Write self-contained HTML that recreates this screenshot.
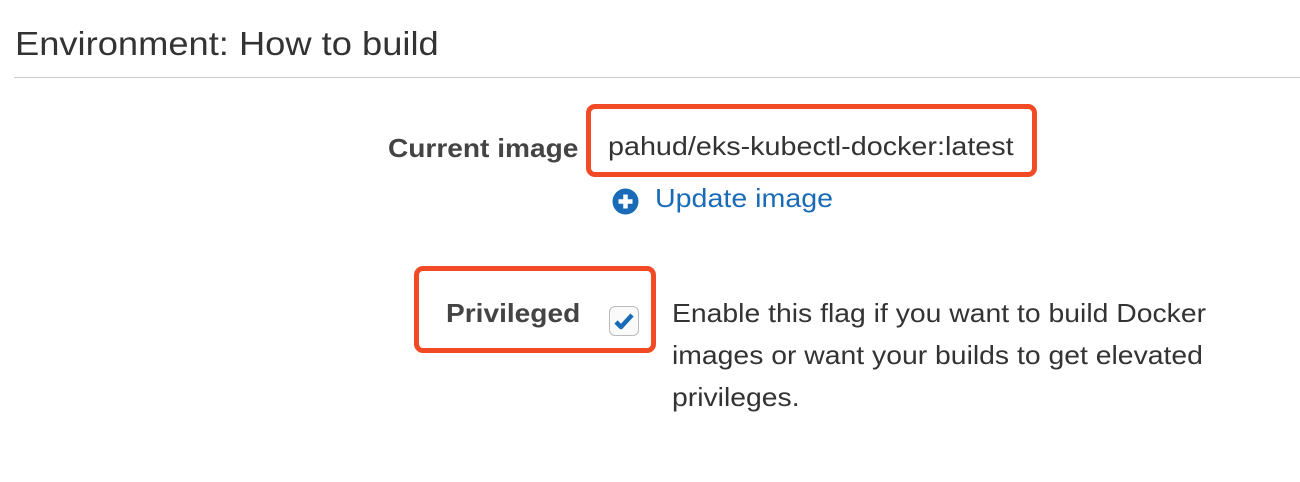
<!DOCTYPE html>
<html><head><style>
body{margin:0;width:1300px;height:482px;background:#fff;font-family:"Liberation Sans",Arial,sans-serif;color:#333;position:relative;overflow:hidden}
.a{position:absolute;white-space:nowrap}
.s{transform-origin:0 50%}
</style></head><body>
<div class="a s" style="left:15px;top:25px;font-size:33px;color:#333;transform:scaleX(1.1)">Environment: How to build</div>
<div class="a" style="left:14px;top:77px;width:1286px;height:1px;background:#ccc"></div>
<div class="a s" style="left:388px;top:133px;font-size:26px;font-weight:bold;color:#444;transform:scaleX(1.08)">Current image</div>
<div class="a" style="left:586px;top:104px;width:441px;height:63px;border:5px solid #f24a25;border-radius:9px"></div>
<div class="a s" style="left:608px;top:131px;font-size:26px;color:#333;transform:scaleX(1.105)">pahud/eks-kubectl-docker:latest</div>
<svg class="a" style="left:612px;top:188px" width="27" height="27" viewBox="0 0 27 27"><circle cx="13.5" cy="13.5" r="13" fill="#1a6bb7"/><path d="M13.5 6.5v14M6.5 13.5h14" stroke="#fff" stroke-width="4.5"/></svg>
<div class="a s" style="left:655px;top:183px;font-size:26px;color:#1a6bb7;transform:scaleX(1.1)">Update image</div>
<div class="a" style="left:414px;top:266px;width:232px;height:77px;border:5px solid #f24a25;border-radius:9px"></div>
<div class="a s" style="left:446px;top:298px;font-size:26px;font-weight:bold;color:#444;transform:scaleX(1.08)">Privileged</div>
<div class="a" style="left:609px;top:306px;width:28px;height:28px;border:1.5px solid #bbb;border-radius:6px;background:#fafafa"></div>
<svg class="a" style="left:611px;top:308px" width="26" height="26" viewBox="0 0 26 26"><path d="M5 14l5 5 11-12" fill="none" stroke="#1a6bb7" stroke-width="4.5" stroke-linejoin="round"/></svg>
<div class="a" style="left:672px;top:292px;font-size:26px;line-height:42px;color:#333;transform:scaleX(1.09);transform-origin:0 0">Enable this flag if you want to build Docker<br>images or want your builds to get elevated<br>privileges.</div>
</body></html>
